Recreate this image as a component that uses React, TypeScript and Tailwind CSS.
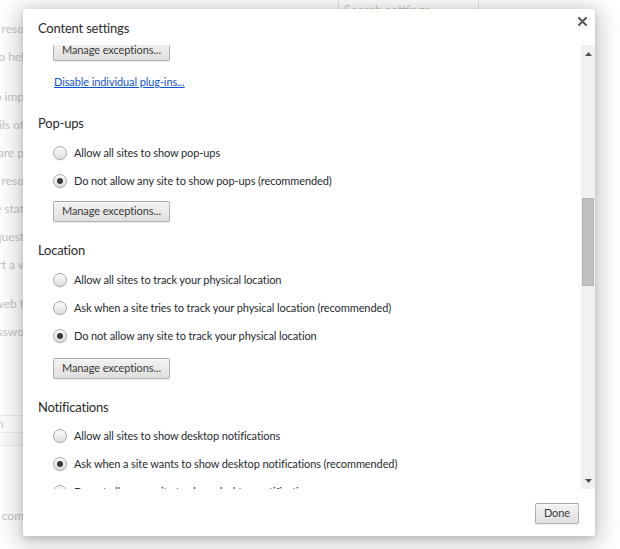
import React from 'react'

const bgRows: { text: string; gap?: string }[] = [
  { text: 'help reso' },
  { text: 'to hel' },
  { text: 'to imp', gap: 'mt-[12px]' },
  { text: 'details of' },
  { text: 'malware p' },
  { text: 'help reso' },
  { text: 'usage stat' },
  { text: 'request' },
  { text: 'start a v' },
  { text: 'out web f', gap: 'mt-[11px]' },
  { text: 'passwo' },
]

function BackgroundPage() {
  return (
    <div className="flex flex-col text-[12px] text-[#c6c6c6]">
      {/* Search box of the settings page, mostly hidden behind the dialog */}
      <div className="h-[15px]">
        <div className="-mt-[7px] ml-[338px] flex h-[36px] w-[141px] items-center border-x border-[#e4e4e4] pl-[5px] text-[13px] text-[#d8cdb9]">
          Search settings
        </div>
      </div>

      {bgRows.map((row, i) => (
        <div
          key={i}
          className={`flex h-[28px] w-[24px] items-center justify-end overflow-hidden whitespace-nowrap ${row.gap ?? ''}`}
        >
          <span>{row.text}</span>
        </div>
      ))}

      {/* Font size / zoom inputs */}
      <div className="mt-[69px] flex h-[18px] w-[40px] items-center border-y border-[#ececec] text-[12px]">
        <span className="-ml-[3px]">n</span>
      </div>
      <div className="flex h-[13px] w-[40px] border-b border-[#ececec] bg-[#fbfbfb]" />

      <div className="mt-[56px] flex h-[28px] w-[24px] items-center justify-end overflow-hidden whitespace-nowrap">
        <span>com</span>
      </div>
    </div>
  )
}

function Radio({ label, checked }: { label: string; checked?: boolean }) {
  return (
    <label className="flex h-[28px] items-center gap-[7px]">
      <span className="flex h-[14px] w-[14px] items-center justify-center rounded-full border border-[#a9a9a9] bg-[linear-gradient(#fafafa,#f0f0f0_40%,#dcdcdc)] shadow-[0_1px_0_rgba(0,0,0,0.06)]">
        {checked && <span className="h-[6px] w-[6px] rounded-full bg-[#3a3a3a]" />}
      </span>
      <span className="text-[11px] tracking-[-0.1px] text-[#262b31]">{label}</span>
    </label>
  )
}

function GrayButton({ children, className = '' }: { children: React.ReactNode; className?: string }) {
  return (
    <button
      className={`flex h-[21px] items-center self-start rounded-[2px] border border-black/25 bg-[linear-gradient(#f1f1f1,#ececec_38%,#dedede)] px-[8px] text-[11px] tracking-[-0.1px] text-[#3a3a3a] shadow-[0_1px_0_rgba(0,0,0,0.08),inset_0_1px_2px_rgba(255,255,255,0.75)] ${className}`}
    >
      {children}
    </button>
  )
}

function Heading({ children, className = '' }: { children: React.ReactNode; className?: string }) {
  return (
    <h3 className={`flex h-[28px] items-center text-[13px] tracking-[-0.2px] text-[#2b2b2b] ${className}`}>
      {children}
    </h3>
  )
}

function Scrollbar() {
  return (
    <div className="flex w-[14px] shrink-0 flex-col bg-[#f1f1f1]">
      <div className="flex h-[17px] items-center justify-center">
        <svg width="7" height="4" viewBox="0 0 7 4">
          <path d="M0 4 L3.5 0 L7 4 Z" fill="#505050" />
        </svg>
      </div>
      <div className="flex-1">
        <div className="ml-[1px] mt-[136px] h-[88px] w-[12px] border border-[#b5b5b5] bg-[#c1c1c1]" />
      </div>
      <div className="flex h-[17px] items-center justify-center">
        <svg width="7" height="4" viewBox="0 0 7 4">
          <path d="M0 0 L3.5 4 L7 0 Z" fill="#505050" />
        </svg>
      </div>
    </div>
  )
}

function ContentSettingsDialog() {
  return (
    <div className="absolute left-[23px] top-[9px] flex h-[527px] w-[572px] flex-col rounded-[2px] bg-white shadow-[0_4px_23px_5px_rgba(0,0,0,0.2),0_2px_6px_rgba(0,0,0,0.15)]">
      {/* Header */}
      <div className="flex h-[36px] shrink-0 justify-between pl-[15px] pr-[8px]">
        <h1 className="mt-[10px] text-[13px] leading-[18px] tracking-[-0.2px] text-[#2b2b2b]">Content settings</h1>
        <button className="mt-[8px] flex h-[9px] w-[9px] items-center justify-center">
          <svg width="9" height="9" viewBox="0 0 9 9">
            <path d="M1 1 L8 8 M8 1 L1 8" stroke="#555" strokeWidth="2" strokeLinecap="round" />
          </svg>
        </button>
      </div>

      {/* Scrolled content */}
      <div className="flex min-h-0 flex-1">
        <div className="flex-1 overflow-hidden">
          <div className="-mt-[5px] flex flex-col pl-[15px]">
            <div className="flex flex-col pl-[15px]">
              <GrayButton>Manage exceptions...</GrayButton>
              <a
                href="#"
                className="ml-[1px] mt-[13px] block h-[16px] self-start text-[11px] leading-[16px] tracking-[-0.1px] text-[#15c] underline"
              >
                Disable individual plug-ins...
              </a>
            </div>

            <Heading className="mt-[20px]">Pop-ups</Heading>
            <div className="mt-[1px] flex flex-col pl-[15px]">
              <Radio label="Allow all sites to show pop-ups" />
              <Radio label="Do not allow any site to show pop-ups (recommended)" checked />
              <GrayButton className="mt-[6px]">Manage exceptions...</GrayButton>
            </div>

            <Heading className="mt-[15px]">Location</Heading>
            <div className="mt-[1px] flex flex-col pl-[15px]">
              <Radio label="Allow all sites to track your physical location" />
              <Radio label="Ask when a site tries to track your physical location (recommended)" />
              <Radio label="Do not allow any site to track your physical location" checked />
              <GrayButton className="mt-[8px]">Manage exceptions...</GrayButton>
            </div>

            <Heading className="mt-[15px]">Notifications</Heading>
            <div className="flex flex-col pl-[15px]">
              <Radio label="Allow all sites to show desktop notifications" />
              <Radio label="Ask when a site wants to show desktop notifications (recommended)" checked />
              <Radio label="Do not allow any site to show desktop notifications" />
            </div>
          </div>
        </div>
        <Scrollbar />
      </div>

      {/* Footer */}
      <div className="flex h-[47px] shrink-0 items-start justify-end pr-[16px] pt-[14px]">
        <GrayButton>Done</GrayButton>
      </div>
    </div>
  )
}

export default function App() {
  return (
    <div className="relative h-[549px] w-[620px] overflow-hidden bg-white font-['Lato',sans-serif]">
      <BackgroundPage />
      <ContentSettingsDialog />
    </div>
  )
}
